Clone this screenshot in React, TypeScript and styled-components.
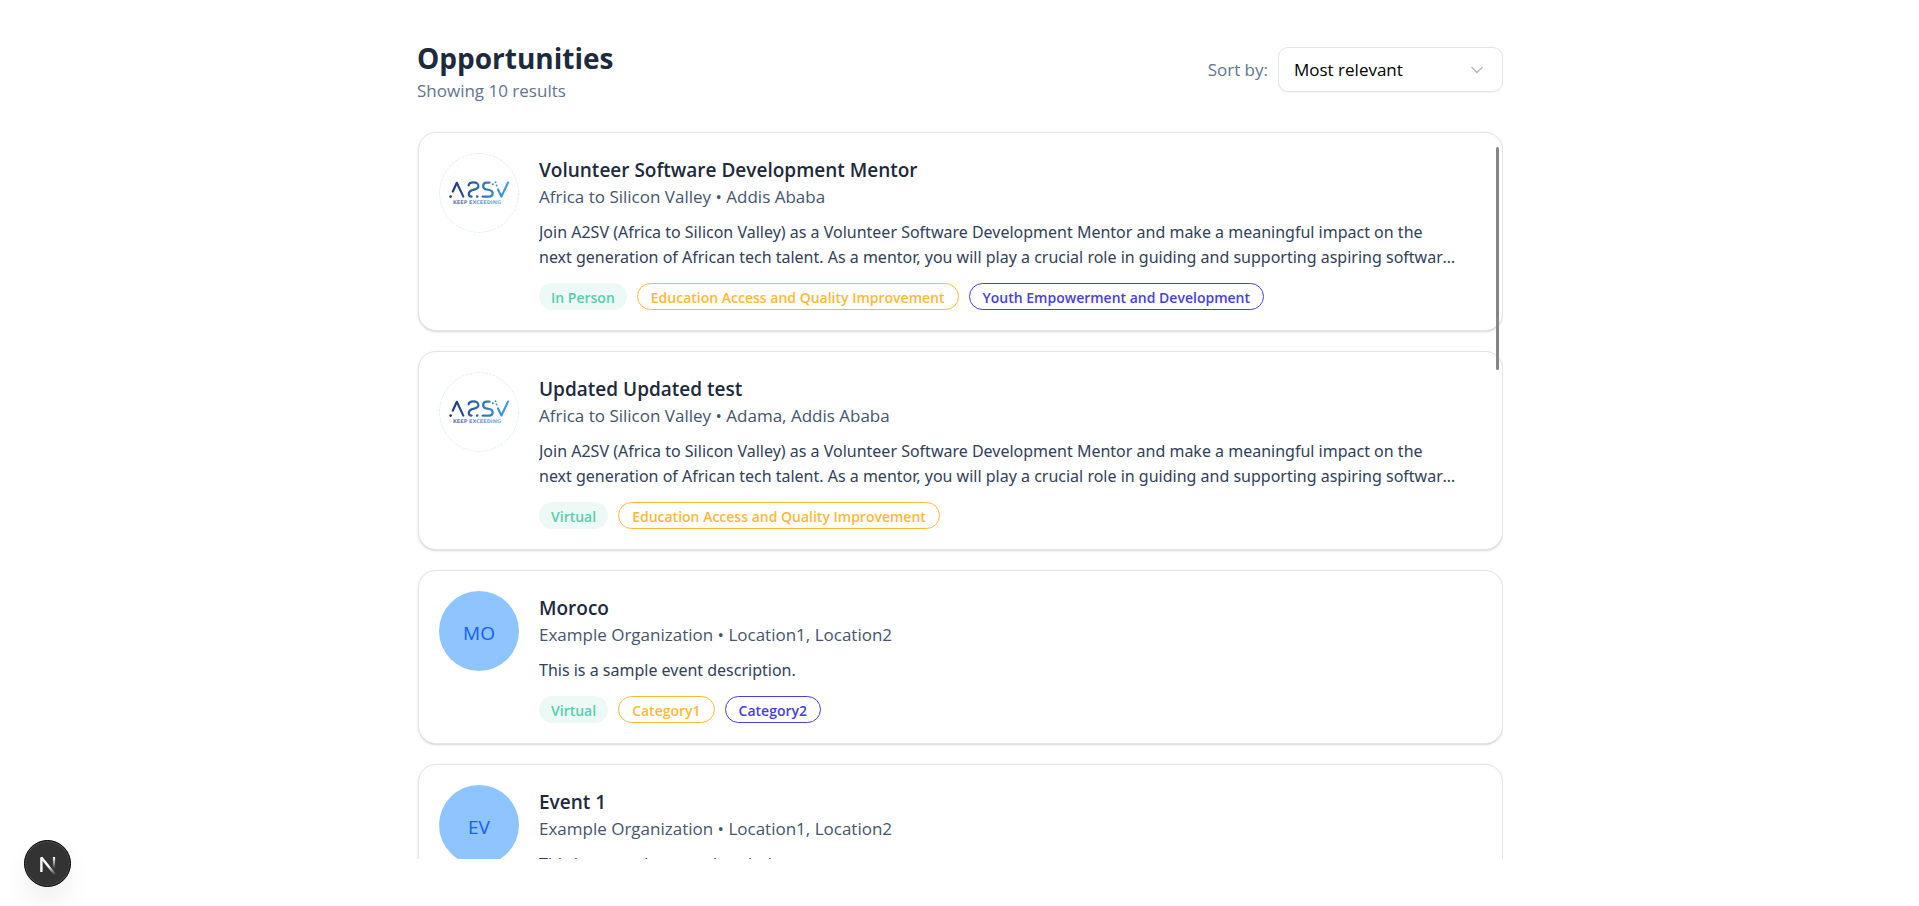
import React, { useState } from "react";
import styled, { createGlobalStyle, css } from "styled-components";

const GlobalStyle = createGlobalStyle`
  *, *::before, *::after { box-sizing: border-box; }
  body {
    margin: 0;
    background: #fff;
    color: #1d293d;
    font-family: "Segoe UI", "Open Sans", "Noto Sans", sans-serif;
    font-size: 17px;
    line-height: 25px;
  }
  h1, h2, p, ul { margin: 0; padding: 0; }
`;

const Page = styled.main`
  display: flex;
  flex-direction: column;
  gap: 27px;
  width: 100%;
  max-width: 1087px;
  height: 100vh;
  margin: 0 auto;
  padding: 40px 0 47px;
`;

const Header = styled.header`
  display: flex;
  justify-content: space-between;
  align-items: flex-start;
  padding-left: 1px;
`;

const Heading = styled.h1`
  padding-bottom: 2px;
  font-size: 28px;
  line-height: 36px;
  font-weight: 700;
`;

const ResultCount = styled.p`
  color: #62748e;
  line-height: 26px;
`;

const SortField = styled.div`
  display: flex;
  align-items: center;
  gap: 10px;
  padding-top: 7px;
  color: #62748e;
`;

const SelectWrap = styled.div`
  position: relative;
  width: 225px;
`;

const Select = styled.select`
  appearance: none;
  display: block;
  width: 100%;
  height: 45px;
  padding: 0 40px 0 15px;
  border: 1px solid #e5e5e5;
  border-radius: 10px;
  background: #fff;
  box-shadow: 0 1px 2px rgba(0, 0, 0, 0.06);
  color: #000;
  font: inherit;
`;

const SelectArrow = styled.svg`
  position: absolute;
  top: 18px;
  right: 19px;
  pointer-events: none;
`;

const ListFrame = styled.section`
  position: relative;
  flex: 1;
  min-height: 0;
`;

const CardList = styled.ul`
  display: flex;
  flex-direction: column;
  gap: 20px;
  height: 100%;
  padding: 1px 0 1px 2px;
  overflow-y: auto;
  scrollbar-width: none;
  list-style: none;
`;

const ScrollThumb = styled.div`
  position: absolute;
  top: 16px;
  right: 4px;
  width: 3px;
  height: 223px;
  border-radius: 2px;
  background: #858585;
`;

const Card = styled.li`
  display: flex;
  flex-shrink: 0;
  gap: 20px;
  padding: 20px;
  border: 1px solid #e5e5e5;
  border-radius: 18px;
  background: #fff;
  box-shadow: 0 1px 3px rgba(0, 0, 0, 0.1), 0 1px 2px -1px rgba(0, 0, 0, 0.2);
`;

const Avatar = styled.div<{ $filled?: boolean }>`
  display: flex;
  flex: none;
  align-items: center;
  justify-content: center;
  width: 80px;
  height: 80px;
  border-radius: 50%;
  overflow: hidden;
  ${({ $filled }) =>
    $filled &&
    css`
      padding-top: 4px;
      background: #8ec5ff;
      color: #155dfc;
      font-size: 19px;
    `}
`;

const CardBody = styled.div`
  flex: 1;
  min-width: 0;
  padding-top: 3px;
`;

const Title = styled.h2`
  font-size: 19px;
  line-height: 28px;
  font-weight: 600;
`;

const Meta = styled.p`
  color: #45556c;
`;

const Description = styled.p`
  display: -webkit-box;
  -webkit-box-orient: vertical;
  -webkit-line-clamp: 2;
  overflow: hidden;
  margin: 11px 24px 13px 0;
  color: #314158;
  font-family: "Segoe UI", "Noto Sans", sans-serif;
  font-size: 16px;
`;

const Tags = styled.div`
  display: flex;
  flex-wrap: wrap;
  gap: 10px;
`;

type Tone = "mode" | "amber" | "indigo";

const toneStyles = {
  mode: css`
    padding: 2px 12px 0;
    background: #edf9f6;
    color: #56cdad;
  `,
  amber: css`
    border: 1px solid #ffb836;
    color: #ffb836;
  `,
  indigo: css`
    border: 1px solid #4640de;
    color: #4640de;
  `,
};

const Tag = styled.span<{ $tone: Tone }>`
  height: 27px;
  padding: 1px 13px 0;
  border-radius: 14px;
  font-size: 14px;
  line-height: 25px;
  font-weight: 600;
  ${({ $tone }) => toneStyles[$tone]}
`;

const DevButton = styled.button`
  position: fixed;
  left: 24px;
  bottom: 19px;
  width: 47px;
  height: 47px;
  padding: 0;
  border: 1px solid #000;
  border-radius: 50%;
  background: #333;
  box-shadow: inset 0 0 0 1px #4a4a4a, 0 16px 32px -8px rgba(0, 0, 0, 0.14);
`;

const A2svLogo = () => (
  <svg width="80" height="80" viewBox="0 0 80 80" role="img" aria-label="A2SV">
    <defs>
      <linearGradient id="a2sv" gradientUnits="userSpaceOnUse" x1="11" y1="0" x2="70" y2="0">
        <stop offset="0" stopColor="#20307c" />
        <stop offset="0.5" stopColor="#2f6db3" />
        <stop offset="1" stopColor="#3ba4dc" />
      </linearGradient>
    </defs>
    <circle cx="40" cy="40" r="39.5" fill="#fff" stroke="#dbeafe" strokeWidth="1" strokeDasharray="3 1" />
    <g fill="none" stroke="url(#a2sv)" strokeWidth="2.2" strokeLinecap="round" strokeLinejoin="round">
      <path d="M13.8 38.6 L17.8 29.8 L24.3 43.6" />
      <path d="M29.6 32.4 C30 30 32 29.4 34.4 29.4 C38 29.4 39.6 31 39.4 33.4 C39.2 36 36 36.4 33.4 37 C30.8 37.8 29.8 39.4 29.8 41 C29.8 43 31 43.6 32.6 43.6" />
      <path d="M50.6 29.6 H47.6 C43.4 29.6 43 35.2 47 36.4 L50.6 37 C55 38 54.6 43.6 50 43.6 H43.6" />
      <path d="M59 36.4 L62.4 43.6 L69 29.6" />
    </g>
    <g fill="url(#a2sv)">
      <circle cx="11.6" cy="43.6" r="1.3" />
      <circle cx="38.2" cy="43.6" r="1.3" />
      <circle cx="53.8" cy="31.2" r="1" />
      <circle cx="56.6" cy="29.2" r="0.9" />
      <circle cx="57.6" cy="32.6" r="1" />
    </g>
    <text x="14" y="50.6" fontFamily="DejaVu Sans, sans-serif" fontSize="5" fontWeight="700" fill="url(#a2sv)" opacity="0.7">
      KEEP EXCEEDING
    </text>
  </svg>
);

const NextLogo = () => (
  <svg width="45" height="45" viewBox="0 0 45 45" fill="none" aria-hidden="true">
    <defs>
      <linearGradient id="nDiag" gradientUnits="userSpaceOnUse" x1="24" y1="25" x2="30" y2="34">
        <stop stopColor="#fff" />
        <stop offset="1" stopColor="#fff" stopOpacity="0" />
      </linearGradient>
      <linearGradient id="nStem" gradientUnits="userSpaceOnUse" x1="29" y1="16" x2="29" y2="28">
        <stop stopColor="#fff" />
        <stop offset="1" stopColor="#fff" stopOpacity="0" />
      </linearGradient>
    </defs>
    <path d="M16.4 31 V16.6 L30.4 34" stroke="url(#nDiag)" strokeWidth="2.4" strokeLinejoin="bevel" />
    <path d="M29 16 V28" stroke="url(#nStem)" strokeWidth="2.2" />
  </svg>
);

interface Opportunity {
  title: string;
  organization: string;
  locations: string[];
  description: string;
  mode: string;
  categories: string[];
  initials?: string;
}

const mentorText =
  "Join A2SV (Africa to Silicon Valley) as a Volunteer Software Development Mentor and make a meaningful impact on the next generation of African tech talent. As a mentor, you will play a crucial role in guiding and supporting aspiring software engineers as they build their skills.";

const opportunities: Opportunity[] = [
  {
    title: "Volunteer Software Development Mentor",
    organization: "Africa to Silicon Valley",
    locations: ["Addis Ababa"],
    description: mentorText,
    mode: "In Person",
    categories: ["Education Access and Quality Improvement", "Youth Empowerment and Development"],
  },
  {
    title: "Updated Updated test",
    organization: "Africa to Silicon Valley",
    locations: ["Adama", "Addis Ababa"],
    description: mentorText,
    mode: "Virtual",
    categories: ["Education Access and Quality Improvement"],
  },
  {
    title: "Moroco",
    organization: "Example Organization",
    locations: ["Location1", "Location2"],
    description: "This is a sample event description.",
    mode: "Virtual",
    categories: ["Category1", "Category2"],
    initials: "MO",
  },
  {
    title: "Event 1",
    organization: "Example Organization",
    locations: ["Location1", "Location2"],
    description: "This is a sample event description.",
    mode: "Virtual",
    categories: ["Category1", "Category2"],
    initials: "EV",
  },
];

const categoryTones: Tone[] = ["amber", "indigo"];

const OpportunityCard = ({ item }: { item: Opportunity }) => (
  <Card>
    <Avatar $filled={Boolean(item.initials)}>{item.initials ?? <A2svLogo />}</Avatar>
    <CardBody>
      <Title>{item.title}</Title>
      <Meta>
        {item.organization} • {item.locations.join(", ")}
      </Meta>
      <Description>{item.description}</Description>
      <Tags>
        <Tag $tone="mode">{item.mode}</Tag>
        {item.categories.map((category, i) => (
          <Tag key={category} $tone={categoryTones[i % categoryTones.length]}>
            {category}
          </Tag>
        ))}
      </Tags>
    </CardBody>
  </Card>
);

export default function App() {
  const [sort, setSort] = useState("relevant");
  return (
    <>
      <GlobalStyle />
      <Page>
        <Header>
          <div>
            <Heading>Opportunities</Heading>
            <ResultCount>Showing 10 results</ResultCount>
          </div>
          <SortField>
            <label htmlFor="sort">Sort by:</label>
            <SelectWrap>
              <Select id="sort" value={sort} onChange={(e) => setSort(e.target.value)}>
                <option value="relevant">Most relevant</option>
              </Select>
              <SelectArrow width="14" height="10" viewBox="0 0 14 10" fill="none" aria-hidden="true">
                <path d="M1.5 2 L7 7.5 L12.5 2" stroke="#b8b8b8" strokeWidth="1.4" />
              </SelectArrow>
            </SelectWrap>
          </SortField>
        </Header>
        <ListFrame aria-label="Opportunities">
          <CardList>
            {opportunities.map((item) => (
              <OpportunityCard key={item.title} item={item} />
            ))}
          </CardList>
          <ScrollThumb />
        </ListFrame>
      </Page>
      <DevButton type="button" aria-label="Open developer tools">
        <NextLogo />
      </DevButton>
    </>
  );
}
